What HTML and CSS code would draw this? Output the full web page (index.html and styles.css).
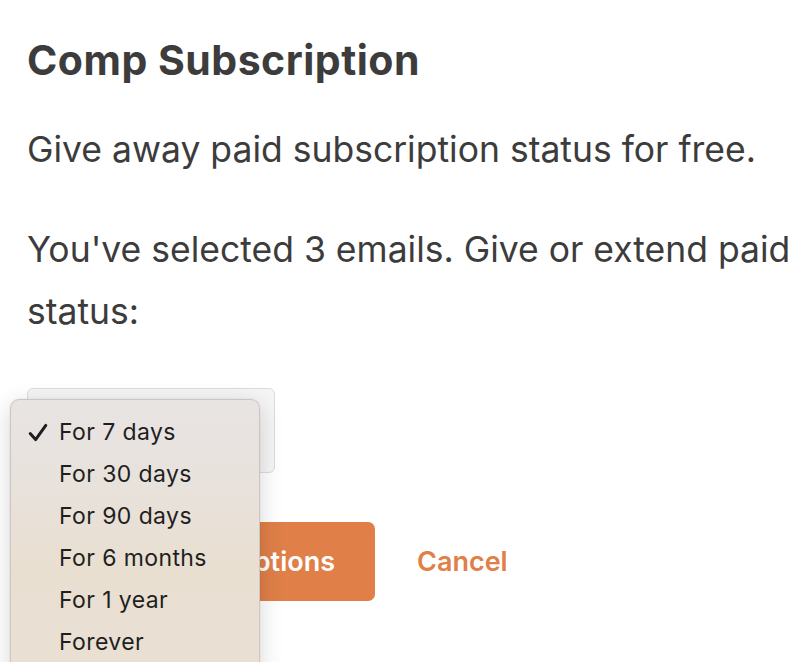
FILE: index.html
```html
<!DOCTYPE html>
<html>
<head>
<meta charset="utf-8">
<link rel="stylesheet" href="styles.css">
</head>
<body>
<div class="page">
  <h1 class="title">Comp Subscription</h1>
  <p class="text first">Give away paid subscription status for free.</p>
  <p class="text selected">You've selected 3 emails. Give or extend paid status:</p>
  <div class="select-wrap">
    <div class="select"></div>
    <div class="menu">
      <div class="item"><svg class="check" width="20" height="19" viewBox="0 0 20 19"><path d="M2.2 10.6 L7.6 16.6 L17.8 2.4" fill="none" stroke="#1e1e1e" stroke-width="3" stroke-linecap="round" stroke-linejoin="round"/></svg>For 7 days</div>
      <div class="item">For 30 days</div>
      <div class="item">For 90 days</div>
      <div class="item">For 6 months</div>
      <div class="item">For 1 year</div>
      <div class="item">Forever</div>
    </div>
  </div>
  <div class="actions">
    <button class="primary">Comp subscriptions</button>
    <button class="link">Cancel</button>
  </div>
</div>
</body>
</html>
```

FILE: styles.css
```css
html, body {
  margin: 0;
  padding: 0;
  background: #ffffff;
}
.page {
  height: 662px;
  box-sizing: border-box;
  overflow: hidden;
  padding: 35px 0 0 27px;
  font-family: Inter, "Noto Sans", sans-serif;
  color: #3c3c3c;
}
.title {
  margin: 0;
  font-size: 41px;
  font-weight: 700;
  line-height: 50px;
  letter-spacing: 0.5px;
}
.text {
  margin: 0;
  font-size: 35.5px;
  line-height: 62px;
  font-weight: 400;
  letter-spacing: 0;
}
.text.first {
  margin-top: 34px;
}
.text.selected {
  margin-top: 38px;
  width: 780px;
}
.select-wrap {
  position: relative;
  margin-top: 45px;
  height: 85px;
}
.select {
  width: 246px;
  height: 83px;
  border: 1px solid #dcdcdc;
  border-radius: 6px;
  background: #f5f5f5;
}
.menu {
  position: absolute;
  left: -17.5px;
  top: 11px;
  width: 250px;
  padding: 10.6px 0 0 0;
  height: 280px;
  box-sizing: border-box;
  border: 1px solid #cbc6c1;
  border-radius: 9px;
  background: linear-gradient(180deg, #e8e4e3 0%, #e8e2dc 30%, #e9dfd1 60%, #e9dfd3 100%);
  box-shadow: 0 6px 24px rgba(0,0,0,0.16), 0 0 2px rgba(0,0,0,0.1);
  z-index: 2;
  font-family: Inter, "Noto Sans", sans-serif;
  font-size: 23px;
  color: #1f1f1f;
}
.item {
  position: relative;
  height: 42px;
  line-height: 42px;
  padding-left: 48.5px;
  letter-spacing: 0.4px;
}
.check {
  position: absolute;
  left: 17.5px;
  top: 12.4px;
}
.actions {
  display: flex;
  align-items: center;
  gap: 42px;
  margin-top: 49px;
}
.primary {
  display: flex;
  align-items: center;
  justify-content: flex-end;
  box-sizing: border-box;
  width: 348px;
  height: 79px;
  padding: 0 40px;
  border: none;
  border-radius: 7px;
  background: #e07f48;
  color: #ffffff;
  font-family: Inter, "Noto Sans", sans-serif;
  font-size: 27px;
  font-weight: 600;
  white-space: nowrap;
}
.link {
  border: none;
  background: none;
  padding: 0;
  color: #e07f48;
  font-family: Inter, "Noto Sans", sans-serif;
  font-size: 27px;
  font-weight: 600;
}
```
